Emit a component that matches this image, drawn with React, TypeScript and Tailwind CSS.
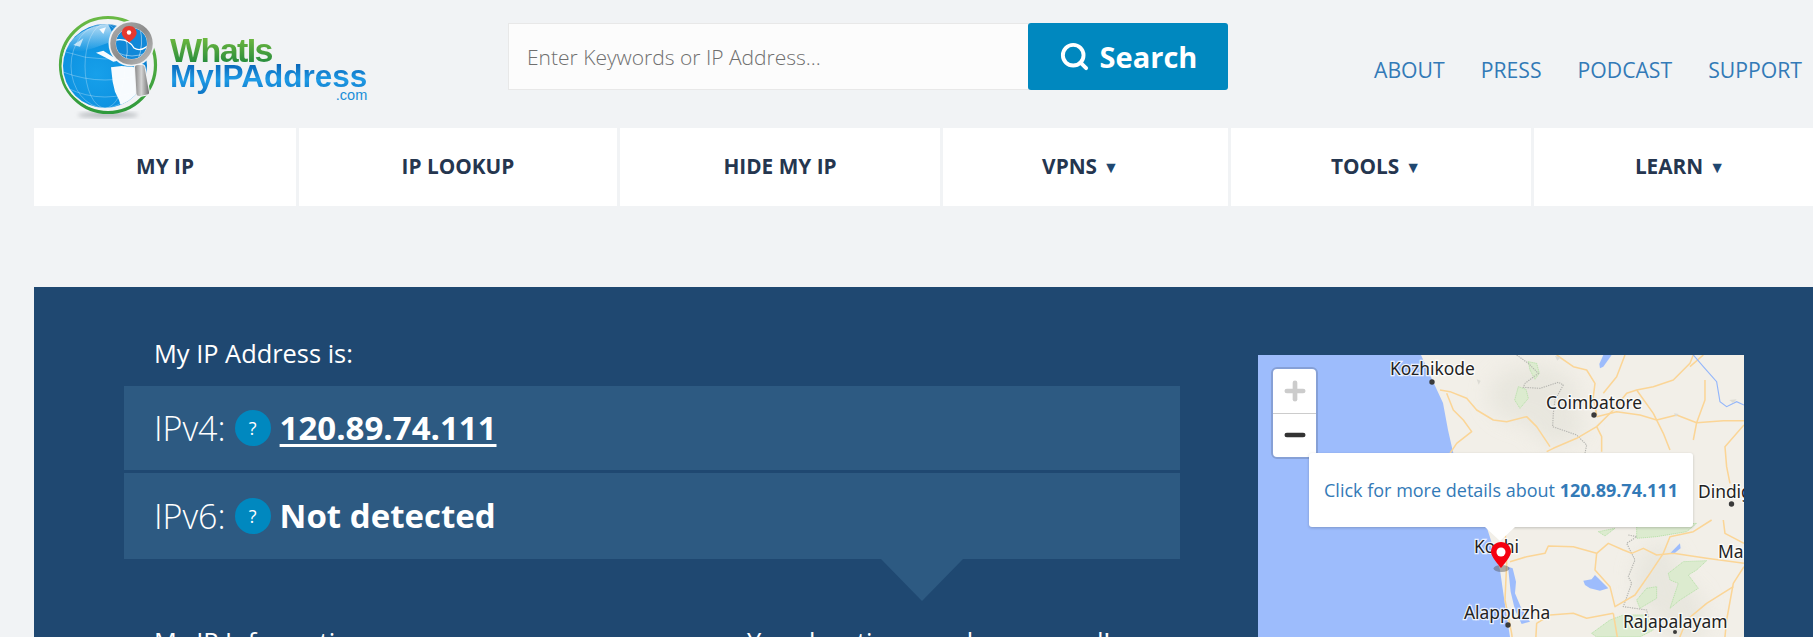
import { Search, Plus, Minus } from "lucide-react";

const navItems = [
  { label: "MY IP", width: "w-[262px]" },
  { label: "IP LOOKUP", width: "w-[318px]" },
  { label: "HIDE MY IP", width: "w-[320px]" },
  { label: "VPNS", width: "w-[285px]", menu: true },
  { label: "TOOLS", width: "w-[300px]", menu: true },
  { label: "LEARN", width: "w-[302px]", menu: true },
];

const topLinks = ["ABOUT", "PRESS", "PODCAST", "SUPPORT"];

function Logo() {
  return (
    <div className="flex items-start w-[458px] shrink-0">
      <svg viewBox="0 0 120 115" className="w-[120px] h-[115px] mt-[10px] shrink-0">
        <defs>
          <radialGradient id="globeBlue" cx="0.4" cy="0.6" r="0.7">
            <stop offset="0" stopColor="#17a0ea" />
            <stop offset="0.75" stopColor="#0b8fdf" />
            <stop offset="1" stopColor="#0a6dbf" />
          </radialGradient>
          <linearGradient id="ringGreen" x1="0" y1="0" x2="0" y2="1">
            <stop offset="0" stopColor="#69b944" />
            <stop offset="1" stopColor="#2f9a3c" />
          </linearGradient>
          <linearGradient id="steel" x1="0" y1="0" x2="1" y2="1">
            <stop offset="0" stopColor="#a9a9a9" />
            <stop offset="0.5" stopColor="#8c8c8c" />
            <stop offset="1" stopColor="#b8b8b8" />
          </linearGradient>
          <linearGradient id="handleSteel" x1="0" y1="0" x2="1" y2="0">
            <stop offset="0" stopColor="#8a8a8a" />
            <stop offset="0.45" stopColor="#d4d4d4" />
            <stop offset="1" stopColor="#6f6f6f" />
          </linearGradient>
          <linearGradient id="globeShine" x1="0" y1="0" x2="0" y2="1">
            <stop offset="0" stopColor="#d9eefb" stopOpacity="0.85" />
            <stop offset="1" stopColor="#d9eefb" stopOpacity="0" />
          </linearGradient>
          <filter id="logoBlur">
            <feGaussianBlur stdDeviation="2" />
          </filter>
          <clipPath id="globeClip">
            <circle cx="55" cy="56" r="42" />
          </clipPath>
          <clipPath id="lensClip">
            <circle cx="81.5" cy="33.5" r="15.5" />
          </clipPath>
        </defs>
        <ellipse cx="58" cy="105" rx="30" ry="3" fill="#8a8f94" opacity="0.55" filter="url(#logoBlur)" />
        <circle cx="58" cy="55" r="47.5" fill="none" stroke="url(#ringGreen)" strokeWidth="3.2" />
        <circle cx="55" cy="56" r="43.5" fill="#f1f3f5" />
        <circle cx="55" cy="56" r="42" fill="url(#globeBlue)" />
        <g clipPath="url(#globeClip)">
          <path d="M14 40 Q30 16 58 14 L66 30 L44 38 L30 42 Z" fill="url(#globeShine)" />
          <g transform="scale(0.3333)" fill="#f7fbfe">
            <path d="M183 172 L215 168 L255 172 L300 195 L280 265 L215 295 L207 270 L195 245 L188 215 Z" />
            <path d="M138 128 L160 122 L188 140 L215 150 L190 155 L165 142 Z" />
            <path d="M148 58 L168 52 L160 72 Z" />
            <path d="M70 105 L100 85 L90 110 Z" opacity="0.7" />
          </g>
          <g fill="none" stroke="#ffffff" strokeOpacity="0.4" strokeWidth="0.7">
            <ellipse cx="55" cy="56" rx="20" ry="42" />
            <ellipse cx="55" cy="56" rx="34" ry="42" />
            <path d="M13 62 Q55 78 97 62" />
            <path d="M17 78 Q55 96 93 78" />
            <path d="M16 42 Q55 56 94 42" />
          </g>
        </g>
        <circle cx="81.5" cy="33.5" r="23" fill="#f1f3f5" />
        <circle cx="81.5" cy="33.5" r="15.5" fill="#1088d8" />
        <g clipPath="url(#lensClip)" fill="none" stroke="#ffffff" strokeWidth="0.8">
          <path d="M66 30 Q78 28 84 38 Q90 42 98 36" strokeWidth="1.4" />
          <path d="M72 20 Q80 34 76 50" strokeOpacity="0.6" />
          <path d="M90 18 Q94 34 88 50" strokeOpacity="0.6" />
          <path d="M66 42 Q82 50 98 42" strokeOpacity="0.6" />
        </g>
        <circle cx="81.5" cy="33.5" r="18.5" fill="none" stroke="url(#steel)" strokeWidth="5.5" />
        <path d="M79.2 16 C74.5 16 71.7 19.5 71.7 23 C71.7 26.5 76.5 30 79.2 32.5 C81.9 30 86.7 26.5 86.7 23 C86.7 19.5 83.9 16 79.2 16 Z" fill="#e5392f" />
        <circle cx="79" cy="22.5" r="2.2" fill="#ffffff" />
        <path d="M85 57 Q85 55 88 55 L92 55 Q94 55 94.5 57 L99 82 Q99.5 84 97 84.5 L90 86 Q87 86.5 86.5 84 Z" fill="#f1f3f5" stroke="#f1f3f5" strokeWidth="2" />
        <path d="M85 57 Q85 55 88 55 L92 55 Q94 55 94.5 57 L99 82 Q99.5 84 97 84.5 L90 86 Q87 86.5 86.5 84 Z" fill="url(#handleSteel)" />
      </svg>
      <div className="mt-[37px] font-['Liberation_Sans',Arial,sans-serif] font-bold flex flex-col">
        <span className="block leading-[27px] text-[34px] tracking-[-1.6px] bg-linear-to-b from-[#6fba3e] to-[#1f8a3c] bg-clip-text text-transparent">
          WhatIs
        </span>
        <span className="block leading-[24px] pb-[8px] text-[31.5px] bg-linear-to-b from-[#0a66b8] via-[#1f9be6] to-[#0a6fc0] bg-clip-text text-transparent">
          MyIPAddress
        </span>
        <span className="block -mt-[8px] self-end text-[14.5px] leading-[14px] font-normal text-[#1a8ed8]">.com</span>
      </div>
    </div>
  );
}

function MapLabel({ x, y, children }: { x: number; y: number; children: string }) {
  return (
    <text
      x={x}
      y={y}
      fill="#222222"
      stroke="#ffffff"
      strokeOpacity="0.8"
      strokeWidth="2.5"
      paintOrder="stroke"
      fontFamily="'Noto Sans', sans-serif"
      fontSize="17.4"
    >
      {children}
    </text>
  );
}

function MapTiles() {
  return (
    <svg viewBox="0 0 486 400" className="absolute inset-0 w-[486px] h-[400px]">
      <defs>
        <filter id="hillBlur">
          <feGaussianBlur stdDeviation="10" />
        </filter>
      </defs>
      <rect width="486" height="400" fill="#9dbcfc" />
      {/* land */}
      <path d="M163 0 L172 20 L185 48 L190 75 L195 97 L205 125 L229 173 L236 195 L242 215 L247 250 L252 282 L262 400 L486 400 L486 0 Z" fill="#f2efe8" />
      <g filter="url(#hillBlur)" fill="#e4e3da" opacity="0.7">
        <ellipse cx="275" cy="40" rx="45" ry="30" />
        <ellipse cx="300" cy="70" rx="26" ry="20" />
        <ellipse cx="400" cy="225" rx="24" ry="36" />
        <ellipse cx="425" cy="260" rx="22" ry="30" />
      </g>

      {/* top half, traced at 3x from x=182 y=-5 */}
      <g transform="translate(182 -5) scale(0.3333)">
        <g fill="#dcebcf" stroke="#a9dc9a" strokeWidth="2" strokeDasharray="4 2">
          <path d="M265 35 L290 40 L298 70 L285 88 L270 60 Z" />
          <path d="M235 110 L258 118 L265 145 L240 175 L224 150 Z" />
        </g>
        <g fill="none" stroke="#b5b5b0" strokeWidth="3.4" strokeDasharray="4 3">
          <path d="M230 15 L265 40 L295 70 L255 100 L250 112 L300 115 L355 97 L370 105 L345 150 L340 190 L338 230 L410 255 L440 285 L435 310" />
        </g>
        <g fill="none" stroke="#fbd596" strokeWidth="4.6" strokeLinejoin="round">
          <path d="M760 15 L750 40 L700 90 L640 110 L590 120 L560 130 L520 180 L470 230 L410 265 L340 295 L320 305" />
          <path d="M470 200 L530 185 L600 195 L650 210 L710 195 L770 218 L850 212 L912 212" />
          <path d="M350 15 L400 50 L440 60 L465 100 L460 140 L470 195" />
          <path d="M555 15 L530 80 L490 130" />
          <path d="M590 120 L640 190 L670 250 L690 300" />
          <path d="M795 90 L795 150 L770 218 L760 270" />
          <path d="M912 225 L855 290 L860 350 L870 400" />
          <path d="M470 230 L485 260 L485 305" />
          <path d="M0 120 L30 125 L80 145 L110 180 L160 210 L200 215 L260 200 L290 230 L330 290" />
          <path d="M20 130 L40 180 L70 210 L95 245 L50 280 L30 310" />
          <path d="M790 15 L750 50" />
        </g>
        <path d="M760 15 L790 50 L830 95 L840 155 L860 170 L890 155 L912 165" fill="none" stroke="#93b6fb" strokeWidth="3.4" />
        <path d="M490 15 L515 15 L490 50 L480 55 L478 42 Z" fill="#9dbcfc" />
        <g fill="#dddcd5">
          <path d="M345 18 L362 22 L352 32 Z" />
          <path d="M110 88 L122 92 L116 104 Z" />
          <path d="M868 150 L890 148 L880 160 Z" />
          <path d="M702 190 L716 192 L708 200 Z" />
        </g>
      </g>

      {/* bottom half, traced at 3x from x=182 y=165 */}
      <g transform="translate(182 165) scale(0.3333)">
        <g fill="#dcebcf" stroke="#a9dc9a" strokeWidth="2" strokeDasharray="4 2">
          <path d="M590 20 L770 10 L740 35 L650 50 L590 55 Z" />
          <path d="M475 35 L525 25 L495 48 Z" />
          <path d="M685 160 L730 125 L800 122 L770 150 L745 165 L775 205 L720 240 L690 265 L715 190 L690 180 Z" />
          <path d="M620 205 L650 200 L650 235 L600 265 L590 240 Z" />
          <path d="M455 340 L510 300 L550 285 L620 285 L640 330 L600 351 L470 351 Z" />
        </g>
        <g fill="none" stroke="#b5b5b0" strokeWidth="3.4" strokeDasharray="4 3">
          <path d="M565 45 L590 50 L560 70 L585 120 L565 170 L575 190 L550 260 L620 270 L625 290" />
        </g>
        <g fill="none" stroke="#fbd596" strokeWidth="4.6" strokeLinejoin="round">
          <path d="M210 125 L260 110 L315 100 L325 78 L400 80 L470 100 L505 70 L550 90 L575 100 L610 85 L650 105 L700 100 L800 115 L912 130" />
          <path d="M470 100 L465 150 L510 200 L525 260 L585 225 L630 160 L670 100 L690 50 L760 35 L815 0" />
          <path d="M520 280 L440 295 L400 280 L330 285 L290 310 L285 400" />
          <path d="M520 280 L540 400" />
          <path d="M912 140 L880 190 L860 300 L850 400" />
          <path d="M880 200 L800 250 L740 300 L700 400" />
          <path d="M850 0 L855 40 L912 70" />
          <path d="M195 20 L200 130 L195 240 L215 340 L222 400" />
        </g>
        <g fill="#9dbcfc">
          <path d="M204 140 L218 145 L228 185 L225 220 L242 260 L270 305 L245 312 L225 270 L212 215 Z" />
          <path d="M430 182 L455 178 L465 165 L505 205 L480 212 L450 205 L435 195 Z" />
          <path d="M692 98 L720 70 L722 85 L705 98 Z" />
        </g>
      </g>

      <circle cx="174" cy="27" r="2.7" fill="#3a3a3a" />
      <circle cx="336" cy="60" r="2.7" fill="#3a3a3a" />
      <circle cx="473.5" cy="149" r="2.7" fill="#3a3a3a" />
      <circle cx="250" cy="270" r="2.7" fill="#3a3a3a" />
      <circle cx="417" cy="277" r="2" fill="#3a3a3a" />
      <MapLabel x={132} y={20}>Kozhikode</MapLabel>
      <MapLabel x={288} y={54}>Coimbatore</MapLabel>
      <MapLabel x={440} y={143}>Dindigul</MapLabel>
      <MapLabel x={216} y={198}>Kochi</MapLabel>
      <MapLabel x={460} y={203}>Madurai</MapLabel>
      <MapLabel x={206} y={264}>Alappuzha</MapLabel>
      <MapLabel x={365} y={273}>Rajapalayam</MapLabel>
      <ellipse cx="243.5" cy="213.5" rx="8" ry="3.5" fill="#555555" opacity="0.45" />
    </svg>
  );
}

function IpRow({ label, children, className }: { label: string; children: React.ReactNode; className: string }) {
  return (
    <div className={`relative flex items-center bg-[#2d5a82] pl-[30px] text-white ${className}`}>
      <span className="text-[34px] font-light leading-none">{label}</span>
      <span className="mx-[9px] flex items-center justify-center w-[36px] h-[36px] rounded-full bg-[#0088bf] text-[18px] leading-none">?</span>
      {children}
    </div>
  );
}

export default function App() {
  return (
    <div className="h-[637px] overflow-hidden bg-[#f1f3f5] font-['Open_Sans','Noto_Sans',sans-serif]">
      {/* Header */}
      <header className="flex items-start h-[128px] pl-[50px]">
        <Logo />
        <form className="flex w-[720px] h-[67px] mt-[23px] shrink-0">
          <input
            placeholder="Enter Keywords or IP Address..."
            className="flex-1 min-w-0 h-full bg-[#fcfcfc] border border-[#e8e8e8] pl-[18px] text-[21px] font-light placeholder:text-[#6f6f6f] outline-none"
          />
          <button type="button" className="flex items-center justify-center gap-[10px] w-[200px] h-full bg-[#0088bf] rounded-[3px] text-white text-[29px] font-bold -ml-px">
            <Search size={31} strokeWidth={3} />
            Search
          </button>
        </form>
        <nav className="flex gap-[36px] ml-[146px] mt-[55px] shrink-0 text-[21.2px] leading-[30px] text-[#337ab7] whitespace-nowrap">
          {topLinks.map((l) => (
            <a key={l}>{l}</a>
          ))}
        </nav>
      </header>

      {/* Main nav */}
      <nav className="flex gap-[3px] ml-[34px] h-[78px]">
        {navItems.map((item) => (
          <div
            key={item.label}
            className={`flex items-center justify-center shrink-0 bg-white text-[20.8px] font-bold text-[#25364f] ${item.menu ? "gap-[6px] pr-[10px]" : ""} ${item.width}`}
          >
            {item.label}
            {item.menu && <span className="text-[16px] leading-none text-[#1f4871]">▼</span>}
          </div>
        ))}
      </nav>

      {/* IP panel */}
      <section className="flex ml-[34px] mt-[81px] h-[500px] bg-[#1f4871]">
        <div className="w-[1146px] pl-[90px] shrink-0">
          <h2 className="pt-[50px] pl-[30px] mb-[17px] text-[25.4px] leading-[32px] font-normal text-white">My IP Address is:</h2>
          <IpRow label="IPv4:" className="h-[84px] mb-[3px]">
            <a className="text-[33px] font-bold underline decoration-[3px] underline-offset-[4px]">120.89.74.111</a>
          </IpRow>
          <IpRow label="IPv6:" className="h-[86px]">
            <span className="text-[33px] font-bold">Not detected</span>
            <div className="absolute top-full left-[757px] w-0 h-0 border-x-[41.5px] border-t-[42px] border-x-transparent border-t-[#2d5a82]" />
          </IpRow>
          <div className="flex mt-[66px] pl-[30px] text-[25.4px] leading-[32px] text-white">
            <h3 className="w-[593px] font-normal">My IP Information:</h3>
            <h3 className="font-normal">Your location may be exposed!</h3>
          </div>
        </div>

        <div className="relative w-[486px] h-[400px] mt-[68px] ml-[78px] overflow-hidden shrink-0">
          <MapTiles />

          {/* zoom control */}
          <div className="absolute left-[13px] top-[12px] w-[47px] h-[92px] border-2 border-[#86a0d6] rounded-[6px] bg-white flex flex-col">
            <div className="flex-1 flex items-center justify-center border-b border-[#cccccc] text-[#cccccc]">
              <Plus size={28} strokeWidth={4} />
            </div>
            <div className="flex-1 flex items-center justify-center text-[#333333]">
              <Minus size={28} strokeWidth={4} />
            </div>
          </div>

          {/* popup */}
          <div className="absolute left-[51px] top-[98px] w-[384px] h-[74px] flex items-center justify-center rounded-[3px] bg-white shadow-[0_1px_3px_rgba(0,0,0,0.2)] text-[18px] text-[#337ab7] whitespace-nowrap">
            <span>Click for more details about <b className="font-bold">120.89.74.111</b></span>
            <div className="absolute top-full left-[176px] w-0 h-0 border-x-[15px] border-t-[14px] border-x-transparent border-t-white" />
          </div>

          {/* pin */}
          <svg viewBox="0 0 20 26" className="absolute left-[233px] top-[187px] w-[20px] h-[26px]">
            <path d="M10 0 C4.4 0 0 4.3 0 9.7 C0 14.5 7 22 10 26 C13 22 20 14.5 20 9.7 C20 4.3 15.6 0 10 0 Z" fill="#f5000f" />
            <circle cx="10" cy="10" r="4.5" fill="#ffffff" />
          </svg>
        </div>
      </section>
    </div>
  );
}
